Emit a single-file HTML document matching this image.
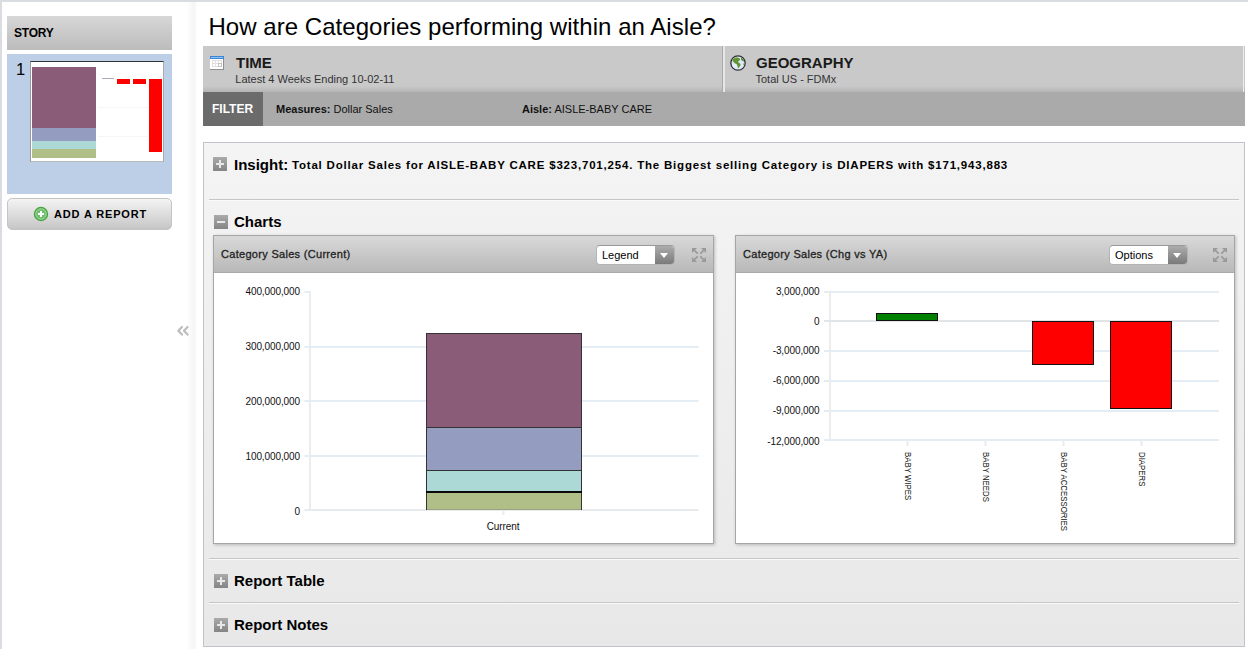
<!DOCTYPE html>
<html><head><meta charset="utf-8">
<style>
*{margin:0;padding:0;box-sizing:border-box}
html,body{width:1248px;height:649px;overflow:hidden;background:#fff;font-family:"Liberation Sans",sans-serif;color:#000}
.a{position:absolute;white-space:nowrap;line-height:1}
.topb{left:0;top:0;width:1248px;height:2px;background:#d9dde2}
.leftb{left:0;top:0;width:2px;height:649px;background:#d9dde2}
.shade{left:187px;top:2px;width:10px;height:647px;background:linear-gradient(to right,#fff 0,#f7f7f7 55%,#f5f5f5 75%,#fff 100%)}
.storyh{left:7px;top:16px;width:165px;height:34px;background:linear-gradient(#d7d7d7,#bcbcbc)}
.blue{left:7px;top:54px;width:165px;height:140px;background:#bccfe6}
.btn{left:7px;top:198px;width:165px;height:32px;border-radius:5px;border:1px solid #c4c4c4;background:linear-gradient(#f4f4f4,#c6c6c6)}
.hdr{left:203px;top:46px;width:1042px;height:46px;background:linear-gradient(#c9c9c9 0,#c9c9c9 40px,#b4b4b4 46px)}
.flt{left:203px;top:92px;width:1042px;height:34px;background:#aaaaaa}
.fbox{left:203px;top:92px;width:60px;height:34px;background:#6b6b6b}
.panel{left:203px;top:142px;width:1042px;height:505px;border:1px solid #c2c2ca;background:linear-gradient(#f4f4f4,#e8e8e8)}
.div{height:2px;border-top:1px solid #c6c6c6;border-bottom:1px solid #fafafa}
.ico{width:14px;height:14px;background:linear-gradient(#aaa,#858585)}
.ico:before{content:"";position:absolute;left:3px;top:6px;width:8px;height:2px;background:#e8e8e8}
.ico.p:after{content:"";position:absolute;left:6px;top:3px;width:2px;height:8px;background:#e8e8e8}
.cp{background:#fff;border:1px solid #a6a6a6;box-shadow:1px 1px 3px rgba(0,0,0,.22)}
.ch{background:linear-gradient(#d9d9d9,#b8b8b8);border-bottom:1px solid #a9a9a9}
.dd{width:79px;height:20px;border-radius:4px;background:#fff;overflow:hidden;border:1px solid #b4b4b4;border-top-color:#9a9a9a}
.ddb{position:absolute;right:0;top:0;width:19px;height:18px;background:linear-gradient(#acacac,#7a7a7a)}
.ddb:after{content:"";position:absolute;left:5px;top:7px;border-left:4px solid transparent;border-right:4px solid transparent;border-top:5px solid #fff}
.lbl{font-size:10px;letter-spacing:-0.1px;color:#111}
</style></head><body>
<div class="a topb"></div>
<div class="a leftb"></div>
<div class="a shade"></div>

<!-- sidebar -->
<div class="a storyh"></div>
<div class="a" style="left:14px;top:27px;font-size:12px;font-weight:bold;letter-spacing:-0.2px">STORY</div>
<div class="a blue"></div>
<div class="a" style="left:16px;top:61px;font-size:16.5px">1</div>
<div class="a" style="left:30px;top:61px;width:134px;height:101px;background:#fff;border-top:1px solid #333;border-left:1px solid #999;border-right:1px solid #aaa;border-bottom:1px solid #bbb"></div>
<div class="a" style="left:32px;top:67px;width:64px;height:61px;background:#8a5c78"></div>
<div class="a" style="left:32px;top:128px;width:64px;height:13px;background:#949dc0"></div>
<div class="a" style="left:32px;top:141px;width:64px;height:8px;background:#acd8d6"></div>
<div class="a" style="left:32px;top:149px;width:64px;height:9px;background:#b0bf88"></div>
<div class="a" style="left:98px;top:107px;width:50px;height:1px;background:#f6f6f6"></div><div class="a" style="left:98px;top:136px;width:50px;height:1px;background:#f6f6f6"></div><div class="a" style="left:102px;top:78px;width:12px;height:1px;background:#aab"></div>
<div class="a" style="left:117px;top:79px;width:13px;height:5px;background:#f00"></div>
<div class="a" style="left:133px;top:79px;width:13px;height:5px;background:#f00"></div>
<div class="a" style="left:149px;top:79px;width:13px;height:73px;background:#f00"></div>
<div class="a btn"></div>
<svg class="a" style="left:33px;top:206px" width="16" height="16" viewBox="0 0 16 16"><circle cx="8" cy="8" r="6.6" fill="#6fc06c" stroke="#46a243" stroke-width="1.2"/><circle cx="8" cy="8" r="5.2" fill="none" stroke="#a6dba2" stroke-width="0.8"/><rect x="5" y="7" width="6" height="2" fill="#fff"/><rect x="7" y="5" width="2" height="6" fill="#fff"/></svg>
<div class="a" style="left:54px;top:209px;font-size:11px;font-weight:bold;letter-spacing:0.85px">ADD A REPORT</div>
<svg class="a" style="left:170px;top:320px" width="25" height="20" viewBox="170 320 25 20"><g fill="none" stroke="#bdbdbd" stroke-width="2.2" stroke-linejoin="round" stroke-linecap="round"><polyline points="182,327 178.3,330.8 182,334.6"/><polyline points="187.6,327 183.9,330.8 187.6,334.6"/></g></svg>

<!-- title -->
<div class="a" style="left:208.5px;top:15px;font-size:24px;letter-spacing:0.04px">How are Categories performing within an Aisle?</div>

<!-- header -->
<div class="a hdr"></div>
<div class="a" style="left:722px;top:46px;width:1px;height:46px;background:#ababab"></div>
<div class="a" style="left:723px;top:46px;width:2px;height:46px;background:#e6e6e6"></div>
<div class="a" style="left:1243px;top:46px;width:1px;height:46px;background:#ececec"></div>
<svg class="a" style="left:210px;top:56px" width="14" height="14" viewBox="0 0 14 14"><rect x="0" y="0" width="14" height="14" fill="#8f8f8f"/><rect x="0" y="0" width="13" height="13" fill="#fff"/><rect x="0" y="0" width="14" height="3" fill="#3d86d6"/><rect x="1" y="1" width="12" height="1" fill="#8cc4f5"/><rect x="2" y="4" width="10" height="7" fill="#e0e0e0"/><g fill="#fff"><rect x="3" y="5" width="2" height="2"/><rect x="6" y="5" width="2" height="2"/><rect x="9" y="5" width="2" height="2"/><rect x="3" y="8" width="2" height="2"/><rect x="6" y="8" width="2" height="2"/></g><rect x="8.5" y="7.5" width="3" height="3" fill="#fff" stroke="#c4c4c4"/></svg>
<div class="a" style="left:236px;top:55px;font-size:15px;font-weight:bold;color:#1a1a1a">TIME</div>
<div class="a" style="left:235.3px;top:74px;font-size:11px;color:#333">Latest 4 Weeks Ending 10-02-11</div>
<svg class="a" style="left:730px;top:55px" width="16" height="16" viewBox="0 0 16 16"><circle cx="8" cy="8" r="7.2" fill="#dfe8f7" stroke="#2f3136" stroke-width="1.3"/><path d="M2.2 5.2C3.5 3.2 5.5 2.3 7.5 2.6 9.6 3 10.8 4.2 9.6 5.4 8.4 6.2 7.6 6.6 8.4 7.6 10 8.2 11 9 10.4 10.6 9.6 12 8.6 12.8 8 13.4 7.6 11.6 7.4 10 6.6 9.4 5.2 8.6 3.8 8 3.4 6.8Z" fill="#5f9535"/><path d="M10.8 2.8C12.4 3.4 13.6 4.6 14.2 6 13.6 6.6 13 6.4 12.2 5.8 11.4 5.2 10.6 4 10.8 2.8Z" fill="#4f8a2d"/><path d="M13.2 8.2C14 8.4 14.4 9 14 10.4 13.4 10 13 9 13.2 8.2Z" fill="#6aa040"/><ellipse cx="5" cy="10.5" rx="2.2" ry="2" fill="#eef3fb" opacity=".6"/></svg>
<div class="a" style="left:756px;top:55px;font-size:15px;font-weight:bold;color:#1a1a1a">GEOGRAPHY</div>
<div class="a" style="left:755.5px;top:74px;font-size:11px;color:#333">Total US - FDMx</div>

<div class="a flt"></div>
<div class="a fbox"></div>
<div class="a" style="left:212px;top:103px;font-size:12px;font-weight:bold;color:#fff">FILTER</div>
<div class="a" style="left:276px;top:104px;font-size:11px;color:#111"><b>Measures:</b> Dollar Sales</div>
<div class="a" style="left:522px;top:104px;font-size:11px;color:#111"><b>Aisle:</b> AISLE-BABY CARE</div>

<!-- main panel -->
<div class="a panel"></div>
<div class="a ico p" style="left:213px;top:157px"></div>
<div class="a" style="left:234px;top:157px;font-size:15px;font-weight:bold">Insight:</div>
<div class="a" style="left:292px;top:159.5px;font-size:11.5px;font-weight:bold;letter-spacing:0.8px">Total Dollar Sales for AISLE-BABY CARE $323,701,254. The Biggest selling Category is DIAPERS with $171,943,883</div>
<div class="a div" style="left:209px;top:199px;width:1030px"></div>
<div class="a ico" style="left:214px;top:215px"></div>
<div class="a" style="left:234px;top:214px;font-size:15px;font-weight:bold">Charts</div>

<!-- chart 1 -->
<div class="a cp" style="left:213px;top:235px;width:501px;height:309px"></div>
<div class="a ch" style="left:214px;top:236px;width:499px;height:37px"></div>
<div class="a" style="left:221px;top:249px;font-size:11px;letter-spacing:0.3px;-webkit-text-stroke:0.3px #222;color:#222">Category Sales (Current)</div>
<div class="a dd" style="left:596px;top:245px"><span style="position:absolute;left:5px;top:3.5px;font-size:11px;line-height:1">Legend</span><div class="ddb"></div></div>
<svg class="a" style="left:692px;top:248px" width="14" height="14" viewBox="0 0 14 14"><g fill="#999" stroke="#999" stroke-linecap="round"><path d="M0 0H5L0 5Z" stroke="none"/><line x1="1.5" y1="1.5" x2="5.2" y2="5.2" stroke-width="1.7"/><path d="M14 0H9L14 5Z" stroke="none"/><line x1="12.5" y1="1.5" x2="8.8" y2="5.2" stroke-width="1.7"/><path d="M0 14H5L0 9Z" stroke="none"/><line x1="1.5" y1="12.5" x2="5.2" y2="8.8" stroke-width="1.7"/><path d="M14 14H9L14 9Z" stroke="none"/><line x1="12.5" y1="12.5" x2="8.8" y2="8.8" stroke-width="1.7"/></g></svg>

<svg class="a" style="left:214px;top:273px" width="499" height="270">
 <g transform="translate(-214,-273)">
  <rect x="309" y="291" width="2" height="220" fill="#ececec"/>
  <g fill="#e4ecf4">
   <rect x="304.5" y="291" width="5" height="2"/>
   <rect x="304.5" y="346" width="394" height="2"/>
   <rect x="304.5" y="400" width="394" height="2"/>
   <rect x="304.5" y="455" width="394" height="2"/>
   <rect x="304.5" y="509" width="5" height="2"/>
   <rect x="502.5" y="510" width="2" height="5"/>
  </g>
  <rect x="311" y="509" width="387.5" height="2" fill="#e8ebee"/>
  <rect x="426.5" y="333.5" width="155" height="94" fill="#8a5c78" stroke="#333"/>
  <rect x="426.5" y="427.5" width="155" height="43" fill="#949dc0" stroke="#333"/>
  <rect x="426.5" y="470.5" width="155" height="21" fill="#acd8d6" stroke="#333"/>
  <rect x="426" y="491" width="156" height="19" fill="#b0bf88"/>
  <path d="M426.5 510V491.5H581.5V510" fill="none" stroke="#333"/>
  <rect x="426" y="491" width="156" height="2" fill="#0a0a0a"/>
  <rect x="427" y="509" width="154" height="1" fill="#9da287"/>
 </g>
</svg>
<div class="a lbl" style="left:200px;top:286.5px;width:100px;text-align:right">400,000,000</div>
<div class="a lbl" style="left:200px;top:341.5px;width:100px;text-align:right">300,000,000</div>
<div class="a lbl" style="left:200px;top:396.5px;width:100px;text-align:right">200,000,000</div>
<div class="a lbl" style="left:200px;top:451.5px;width:100px;text-align:right">100,000,000</div>
<div class="a lbl" style="left:200px;top:506.5px;width:100px;text-align:right">0</div>
<div class="a lbl" style="left:453px;top:522px;width:100px;text-align:center">Current</div>

<!-- chart 2 -->
<div class="a cp" style="left:735px;top:235px;width:500px;height:309px"></div>
<div class="a ch" style="left:736px;top:236px;width:498px;height:37px"></div>
<div class="a" style="left:743px;top:249px;font-size:11px;letter-spacing:0.3px;-webkit-text-stroke:0.3px #222;color:#222">Category Sales (Chg vs YA)</div>
<div class="a dd" style="left:1109px;top:245px"><span style="position:absolute;left:5px;top:3.5px;font-size:11px;line-height:1">Options</span><div class="ddb"></div></div>
<svg class="a" style="left:1213px;top:248px" width="14" height="14" viewBox="0 0 14 14"><g fill="#999" stroke="#999" stroke-linecap="round"><path d="M0 0H5L0 5Z" stroke="none"/><line x1="1.5" y1="1.5" x2="5.2" y2="5.2" stroke-width="1.7"/><path d="M14 0H9L14 5Z" stroke="none"/><line x1="12.5" y1="1.5" x2="8.8" y2="5.2" stroke-width="1.7"/><path d="M0 14H5L0 9Z" stroke="none"/><line x1="1.5" y1="12.5" x2="5.2" y2="8.8" stroke-width="1.7"/><path d="M14 14H9L14 9Z" stroke="none"/><line x1="12.5" y1="12.5" x2="8.8" y2="8.8" stroke-width="1.7"/></g></svg>

<svg class="a" style="left:736px;top:273px" width="498" height="270">
 <g transform="translate(-736,-273)">
  <rect x="829" y="291" width="2" height="149" fill="#ececec"/>
  <g fill="#e4ecf4">
   <rect x="824" y="291" width="395" height="2"/>
   <rect x="824" y="350" width="395" height="2"/>
   <rect x="824" y="380" width="395" height="2"/>
   <rect x="824" y="410" width="395" height="2"/>
   <rect x="824" y="439" width="395" height="2"/>
   <rect x="906.5" y="441" width="2" height="5"/>
   <rect x="984.5" y="441" width="2" height="5"/>
   <rect x="1062.5" y="441" width="2" height="5"/>
   <rect x="1140.5" y="441" width="2" height="5"/>
  </g>
  <rect x="824" y="320" width="395" height="2" fill="#e2e5e8"/>
  <rect x="876.5" y="313.5" width="61" height="7" fill="#008000" stroke="#111"/>
  <rect x="1032.5" y="321.5" width="61" height="43" fill="#f00" stroke="#111"/>
  <rect x="1110.5" y="321.5" width="61" height="87" fill="#f00" stroke="#111"/>
 </g>
</svg>
<div class="a lbl" style="left:719.5px;top:287px;width:100px;text-align:right">3,000,000</div>
<div class="a lbl" style="left:719.5px;top:316.5px;width:100px;text-align:right">0</div>
<div class="a lbl" style="left:719.5px;top:346px;width:100px;text-align:right">-3,000,000</div>
<div class="a lbl" style="left:719.5px;top:376px;width:100px;text-align:right">-6,000,000</div>
<div class="a lbl" style="left:719.5px;top:406px;width:100px;text-align:right">-9,000,000</div>
<div class="a lbl" style="left:719.5px;top:436.5px;width:100px;text-align:right">-12,000,000</div>
<div class="a lbl" style="left:911.9px;top:451.5px;font-size:9px;letter-spacing:0;transform-origin:0 0;transform:rotate(90deg) scaleX(.87)">BABY WIPES</div>
<div class="a lbl" style="left:989.9px;top:451.5px;font-size:9px;letter-spacing:0;transform-origin:0 0;transform:rotate(90deg) scaleX(.87)">BABY NEEDS</div>
<div class="a lbl" style="left:1067.9px;top:451.5px;font-size:9px;letter-spacing:0;transform-origin:0 0;transform:rotate(90deg) scaleX(.87)">BABY ACCESSORIES</div>
<div class="a lbl" style="left:1145.9px;top:451.5px;font-size:9px;letter-spacing:0;transform-origin:0 0;transform:rotate(90deg) scaleX(.87)">DIAPERS</div>

<div class="a div" style="left:209px;top:558px;width:1030px"></div>
<div class="a ico p" style="left:214px;top:574px"></div>
<div class="a" style="left:234px;top:573px;font-size:15px;font-weight:bold">Report Table</div>
<div class="a div" style="left:209px;top:602px;width:1030px"></div>
<div class="a ico p" style="left:214px;top:618px"></div>
<div class="a" style="left:234px;top:617px;font-size:15px;font-weight:bold">Report Notes</div>
</body></html>
